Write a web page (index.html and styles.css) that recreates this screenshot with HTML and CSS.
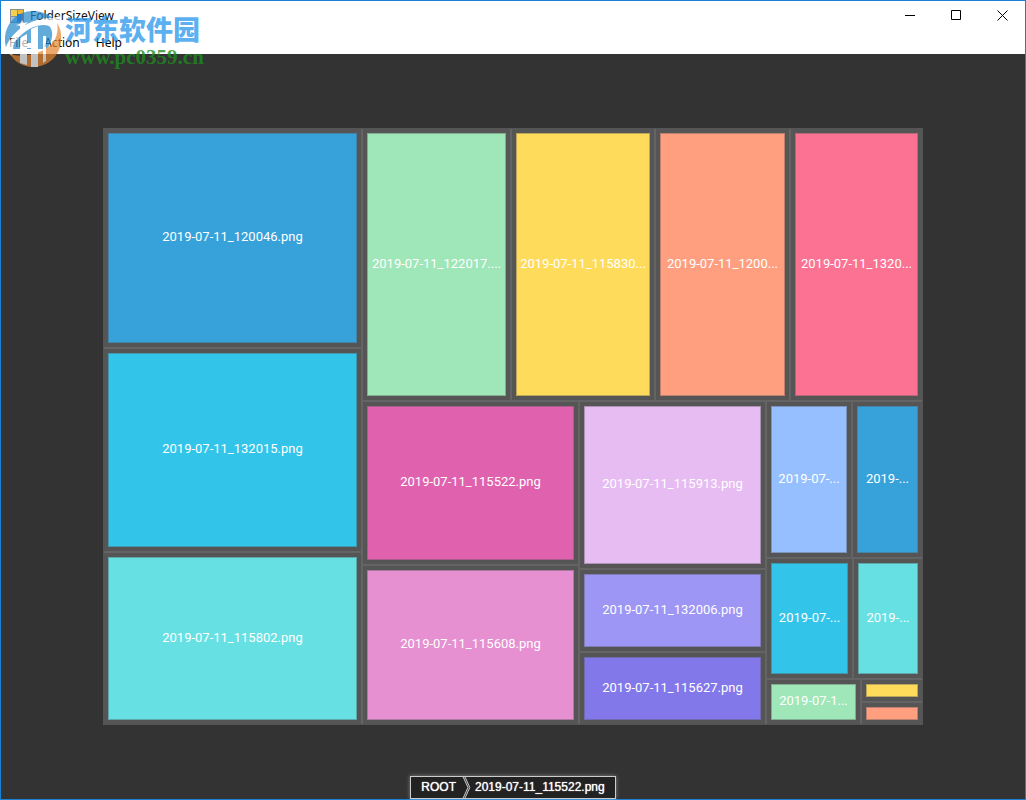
FILE: index.html
```html
<!DOCTYPE html>
<html lang="en">
<head>
<meta charset="utf-8">
<title>FolderSizeView</title>
<link rel="stylesheet" href="styles.css">
</head>
<body>
<div class="window">
  <header class="titlebar">
    <svg class="app-icon" viewBox="0 0 14 14" aria-hidden="true">
      <rect width="14" height="14" fill="#8b8f94"/>
      <rect x="1" y="1" width="6" height="6" fill="#f3cf52"/>
      <rect x="8" y="1" width="5" height="5" fill="#f0b92f"/>
      <rect x="1" y="8" width="6" height="5" fill="#9cc4ea"/>
      <rect x="7" y="5" width="4" height="8" fill="#2f6fd0"/>
      <rect x="11" y="5" width="2" height="8" fill="#d05a3c"/>
    </svg>
    <h1 class="title">FolderSizeView</h1>
    <div class="controls">
      <button class="control" type="button" aria-label="Minimize"><svg viewBox="0 0 11 11"><path d="M0 5.5H10"/></svg></button>
      <button class="control" type="button" aria-label="Maximize"><svg viewBox="0 0 11 11"><path d="M.5 .5H9.5V9.5H.5Z"/></svg></button>
      <button class="control" type="button" aria-label="Close"><svg viewBox="0 0 11 11"><path d="M.5 .5L10.500 10.500M10.500 .5L.5 10.500"/></svg></button>
    </div>
  </header>
  <nav class="menubar" aria-label="Menu">
    <button class="menu" type="button">File</button>
    <button class="menu" type="button">Action</button>
    <button class="menu" type="button">Help</button>
  </nav>

  <main class="stage">
    <div class="map">
      <div class="row">
        <div class="col" style="flex-grow:257">
          <div class="cell" style="flex-grow:218"><div class="tile blue">2019-07-11_120046.png</div></div>
          <div class="cell" style="flex-grow:202"><div class="tile cyan">2019-07-11_132015.png</div></div>
          <div class="cell" style="flex-grow:171"><div class="tile aqua">2019-07-11_115802.png</div></div>
        </div>
        <div class="col" style="flex-grow:559">
          <div class="row" style="flex-grow:271">
            <div class="cell" style="flex-grow:147"><div class="tile green">2019-07-11_122017....</div></div>
            <div class="cell" style="flex-grow:142"><div class="tile yellow">2019-07-11_115830...</div></div>
            <div class="cell" style="flex-grow:133"><div class="tile orange">2019-07-11_1200...</div></div>
            <div class="cell" style="flex-grow:131"><div class="tile rose">2019-07-11_1320...</div></div>
          </div>
          <div class="row" style="flex-grow:322">
            <div class="col" style="flex-grow:215">
              <div class="cell" style="flex-grow:162"><div class="tile magenta">2019-07-11_115522.png</div></div>
              <div class="cell" style="flex-grow:158"><div class="tile pink">2019-07-11_115608.png</div></div>
            </div>
            <div class="col" style="flex-grow:185">
              <div class="cell" style="flex-grow:166"><div class="tile lilac">2019-07-11_115913.png</div></div>
              <div class="cell" style="flex-grow:81"><div class="tile lavender">2019-07-11_132006.png</div></div>
              <div class="cell" style="flex-grow:71"><div class="tile violet">2019-07-11_115627.png</div></div>
            </div>
            <div class="col" style="flex-grow:155">
              <div class="row" style="flex-grow:155">
                <div class="cell" style="flex-grow:84"><div class="tile sky">2019-07-...</div></div>
                <div class="cell" style="flex-grow:69"><div class="tile blue">2019-...</div></div>
              </div>
              <div class="row" style="flex-grow:119">
                <div class="cell" style="flex-grow:85"><div class="tile cyan">2019-07-...</div></div>
                <div class="cell" style="flex-grow:68"><div class="tile aqua">2019-...</div></div>
              </div>
              <div class="row" style="flex-grow:44">
                <div class="cell" style="flex-grow:93"><div class="tile green">2019-07-1...</div></div>
                <div class="col" style="flex-grow:60">
                  <div class="cell" style="flex-grow:21"><div class="tile yellow"></div></div>
                  <div class="cell" style="flex-grow:21"><div class="tile orange"></div></div>
                </div>
              </div>
            </div>
          </div>
        </div>
      </div>
    </div>
  </main>

  <footer class="footer">
    <nav class="crumbs" aria-label="Breadcrumb">
      <a class="crumb" href="#root">ROOT</a>
      <svg class="chevrons" viewBox="0 0 9 22" aria-hidden="true">
        <path class="gap" d="M1 0L6 11L1 22H3L8 11L3 0Z"/>
        <path d="M1 0L6 11L1 22M3 0L8 11L3 22"/>
      </svg>
      <a class="crumb" href="#file">2019-07-11_115522.png</a>
    </nav>
  </footer>

  <div class="watermark">
    <svg class="badge" viewBox="0 0 56 56" aria-hidden="true">
      <path fill="#2288cc" d="M0 31C-1 14 11 0 28 0C36 0 43 3 48 7C32 6 15 14 5 28C3 31 1 35 1 37Z"/>
      <path fill="#ffffff" d="M1 37C8 20 28 7 48 7L56 4C58 18 53 28 46 36C50 25 49 16 44 14C32 12 15 22 7 41C9 47 5 46 1 37Z"/>
      <path fill="#2288cc" d="M14 26C24 16 36 12 44 15C49 19 48 30 42 38H8C8 33 10 30 14 26Z"/>
      <path fill="#e6862e" d="M56 24C58 41 46 56 28 56C18 56 10 51 5 43C18 47 36 43 46 34C50 30 54 22 52 12C54 15 56 19 56 24Z"/>
      <path fill="#ffffff" d="M15 27L22 23V54L15 52ZM26 18L33 15V56H26ZM22 32H26V37H22ZM38 25H41V50L38 52Z"/>
      <path fill="#ffffff" d="M17 9L19 12L23 11L20 14L22 18L18 16L15 19L15 15L11 14L15 13Z"/>
    </svg>
    <div class="brand">
      <span class="brand-name" lang="zh">河东软件园</span>
      <span class="brand-url">www.pc0359.cn</span>
    </div>
  </div>
</div>
</body>
</html>
```
FILE: styles.css
```css
* {
  box-sizing: border-box;
}

body {
  margin: 0;
  font-family: "Noto Sans", "Open Sans", sans-serif;
  font-size: 12px;
}

button {
  border: 0;
  padding: 0;
  background: none;
  font: inherit;
  color: inherit;
}

.window {
  position: relative;
  display: flex;
  flex-direction: column;
  min-height: 100vh;
  border: 1px solid #1a80d5;
  background: #333;
}

/* Title bar and menu */
.titlebar {
  display: flex;
  align-items: center;
  height: 29px;
  padding-left: 9px;
  background: #fff;
}

.app-icon {
  width: 14px;
  height: 14px;
}

.title {
  margin: 0 0 0 6px;
  font-size: 12px;
  font-weight: 400;
  color: #111;
}

.controls {
  display: flex;
  height: 100%;
  margin-left: auto;
}

.control {
  display: grid;
  place-items: center;
  width: 46px;
}

.control svg {
  width: 11px;
  height: 11px;
  fill: none;
  stroke: #000;
}

.menubar {
  display: flex;
  gap: 16px;
  height: 24px;
  padding: 0 8px;
  background: #fff;
  color: #000;
}

/* Treemap */
.stage {
  display: flex;
  flex: 1;
  padding: 74px 102px 0;
}

.map {
  display: flex;
  flex: 1;
  padding: 1px;
  background: #555;
}

.row,
.col {
  display: flex;
  flex: 1 1 0;
  gap: 2px;
  min-width: 0;
  min-height: 0;
  background: #646464;
}

.col {
  flex-direction: column;
}

.cell {
  display: flex;
  flex: 1 1 0;
  min-width: 0;
  min-height: 0;
  background: #555;
}

.tile {
  display: flex;
  flex: 1;
  align-items: center;
  justify-content: center;
  min-width: 0;
  margin: 4px;
  padding-bottom: 2px;
  overflow: hidden;
  border: 1px solid rgba(85, 85, 85, 0.4);
  font: 400 13px/16px Roboto, "Noto Sans", sans-serif;
  white-space: nowrap;
  color: #fff;
}

.blue { background: #37a2da; }
.cyan { background: #32c5e9; }
.aqua { background: #67e0e3; }
.green { background: #9fe6b8; }
.yellow { background: #ffdb5c; }
.orange { background: #ff9f7f; }
.rose { background: #fb7293; }
.magenta { background: #e062ae; }
.pink { background: #e690d1; }
.lilac { background: #e7bcf3; }
.lavender { background: #9d96f5; }
.violet { background: #8378ea; }
.sky { background: #96bfff; }

/* Breadcrumb */
.footer {
  display: flex;
  align-items: flex-end;
  justify-content: center;
  height: 74px;
}

.crumbs {
  display: flex;
  height: 23px;
  border: 1px solid #ccc;
  background: #222;
  box-shadow: 0 0 4px rgba(255, 255, 255, 0.4);
}

.crumb {
  padding: 0 10px;
  font: 12px/20px "Liberation Sans", Arial, sans-serif;
  color: #fff;
  text-decoration: none;
  text-shadow: 0 0 1px #fff;
}

.crumb:first-child {
  padding-right: 6px;
}

.crumb:last-child {
  padding-left: 4px;
}

.chevrons {
  width: 9px;
  height: 21px;
  fill: none;
  stroke: #ccc;
}

.chevrons .gap {
  fill: #444;
  stroke: none;
}

/* Watermark, laid over the title bar */
.watermark {
  position: absolute;
  top: 10px;
  left: 4px;
  display: flex;
  gap: 4px;
  pointer-events: none;
}

.badge {
  width: 56px;
  height: 56px;
  opacity: 0.7;
}

.brand {
  display: flex;
  flex-direction: column;
}

.brand-name {
  font: 900 27px/36px "Noto Sans CJK SC", sans-serif;
  color: rgba(40, 150, 235, 0.75);
}

.brand-url {
  font: 700 21px/20px "Liberation Serif", serif;
  color: rgba(30, 140, 30, 0.8);
}
```
